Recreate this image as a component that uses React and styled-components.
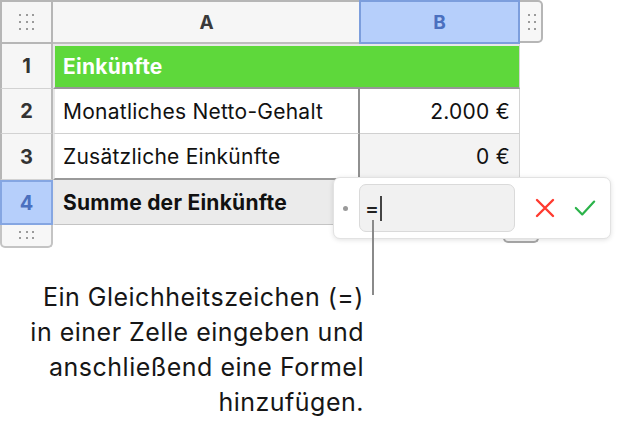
import React from "react";
import styled, { createGlobalStyle } from "styled-components";

const Global = createGlobalStyle`
  html, body { margin: 0; padding: 0; background: #ffffff; }
  body { font-family: Inter, "Liberation Sans", Arial, sans-serif; color: #111; }
  * { box-sizing: border-box; }
`;

const Page = styled.div`
  position: relative;
  width: 630px;
  height: 428px;
  overflow: hidden;
`;

const Sheet = styled.div`
  position: relative;
  display: grid;
  grid-template-columns: 53px 307px 160px 23px;
  grid-template-rows: 44px 45px 45px 46px 45px 23px;
  width: 543px;
`;

const Corner = styled.div`
  grid-column: 1;
  grid-row: 1;
  background: #f6f6f6;
  border: 2px solid #b6b6b6;
  display: flex;
  align-items: center;
  justify-content: center;
`;

const ColHeader = styled.div`
  grid-row: 1;
  grid-column: ${(p) => p.$col};
  display: flex;
  align-items: center;
  justify-content: center;
  font-size: 19px;
  font-weight: 700;
  background: ${(p) => (p.$selected ? "#b6cffb" : "#f6f6f6")};
  color: ${(p) => (p.$selected ? "#4b70bf" : "#3a3a3a")};
  border-top: 2px solid ${(p) => (p.$selected ? "#7c9edd" : "#b6b6b6")};
  border-bottom: 2px solid ${(p) => (p.$selected ? "#7c9edd" : "#bdbdbd")};
  border-left: ${(p) => (p.$selected ? "2px solid #7c9edd" : "none")};
  border-right: ${(p) => (p.$selected ? "2px solid #7c9edd" : "none")};
  margin-left: ${(p) => (p.$selected ? "-1px" : "0")};
`;

const SideHandle = styled.div`
  grid-column: 4;
  grid-row: 1;
  height: 43px;
  background: #f7f7f7;
  border: 2px solid #b6b6b6;
  border-left: none;
  border-radius: 0 5px 5px 0;
  display: flex;
  align-items: center;
  justify-content: center;
  padding-left: 2px;
`;

const BottomHandle = styled.div`
  grid-column: 1;
  grid-row: 6;
  background: #f7f7f7;
  border: 2px solid #c4c4c4;
  border-top: none;
  border-radius: 0 0 5px 5px;
  display: flex;
  align-items: center;
  justify-content: center;
  padding-bottom: 2px;
`;

const DotGrid = styled.div`
  display: grid;
  grid-template-columns: repeat(${(p) => p.$cols}, 2px);
  grid-auto-rows: 2px;
  column-gap: ${(p) => p.$gap}px;
  row-gap: ${(p) => p.$rgap}px;
`;

const Dot = styled.span`
  width: 2px;
  height: 2px;
  border-radius: 1px;
  background: #7c7c7c;
`;

const RowHeader = styled.div`
  grid-column: 1;
  grid-row: ${(p) => p.$row};
  display: flex;
  align-items: center;
  justify-content: center;
  font-size: 20px;
  font-weight: 700;
  background: ${(p) => (p.$selected ? "#b6cffb" : "#f6f6f6")};
  color: ${(p) => (p.$selected ? "#4b70bf" : "#333")};
  border: ${(p) => (p.$selected ? "2px solid #85a6e2" : "none")};
  border-left: 2px solid ${(p) => (p.$selected ? "#85a6e2" : "#b6b6b6")};
  border-right: 2px solid ${(p) => (p.$selected ? "#85a6e2" : "#b9b9b9")};
  border-bottom: ${(p) => (p.$selected ? "2px solid #85a6e2" : "1px solid #d2d2d2")};
`;

const Cell = styled.div`
  grid-row: ${(p) => p.$row};
  grid-column: ${(p) => p.$col};
  display: flex;
  align-items: center;
  justify-content: ${(p) => (p.$right ? "flex-end" : "flex-start")};
  padding: 0 ${(p) => (p.$right ? "9px" : "0")} 0 ${(p) => (p.$right ? "0" : "8px")};
  font-size: 21px;
  letter-spacing: 0.25px;
  font-weight: ${(p) => (p.$bold ? 700 : 400)};
  color: ${(p) => (p.$white ? "#ffffff" : "#111")};
  background: ${(p) => p.$bg || "#ffffff"};
  border-left: ${(p) => (p.$first ? "2px solid #e8e8e8" : "none")};
  border-right: ${(p) => p.$rb || "none"};
  border-bottom: ${(p) => p.$bb || "1px solid #d0d0d0"};
  border-top: ${(p) => (p.$top ? "2px solid #e8e8e8" : "none")};
  white-space: nowrap;
`;

const Peek = styled.div`
  position: absolute;
  left: 503px;
  top: 224px;
  width: 36px;
  height: 19px;
  border: 2px solid #a8a8a8;
  border-top: none;
  border-radius: 0 0 5px 5px;
  background: #f7f7f7;
`;

const Popup = styled.div`
  position: absolute;
  left: 333px;
  top: 177px;
  width: 278px;
  height: 62px;
  background: #ffffff;
  border: 1px solid #e2e2e2;
  border-radius: 7px;
  box-shadow: 0 1px 5px rgba(0, 0, 0, 0.12);
  display: flex;
  align-items: center;
  padding-left: 9px;
`;

const Bullet = styled.span`
  width: 5px;
  height: 5px;
  border-radius: 50%;
  background: #9a9a9a;
  margin-right: 11px;
`;

const Field = styled.div`
  width: 156px;
  height: 48px;
  background: #f1f1f1;
  border: 1px solid #dadada;
  border-radius: 7px;
  display: flex;
  align-items: center;
  padding-left: 5px;
  font-size: 21px;
  font-weight: 500;
  color: #222;
`;

const Caret = styled.span`
  width: 2px;
  height: 25px;
  background: #444;
  margin-left: 1px;
`;

const IconButton = styled.span`
  display: flex;
  align-items: center;
  justify-content: center;
  width: 22px;
  height: 22px;
  margin-left: ${(p) => p.$ml}px;
`;

const Leader = styled.div`
  position: absolute;
  left: 372px;
  top: 220px;
  width: 2px;
  height: 75px;
  background: #8a8a8a;
`;

const Caption = styled.p`
  margin: 32px 0 0 0;
  width: 364px;
  text-align: right;
  font-size: 25px;
  line-height: 35px;
  letter-spacing: 0.5px;
  color: #161616;
`;

function Dots({ cols, rows, gap, rgap }) {
  return (
    <DotGrid $cols={cols} $gap={gap} $rgap={rgap}>
      {Array.from({ length: cols * rows }).map((_, i) => (
        <Dot key={i} />
      ))}
    </DotGrid>
  );
}

export default function App() {
  return (
    <Page>
      <Global />
      <Sheet>
        <Corner>
          <Dots cols={3} rows={3} gap={4.6} rgap={5} />
        </Corner>
        <ColHeader $col={2}>A</ColHeader>
        <ColHeader $col={3} $selected>B</ColHeader>
        <SideHandle>
          <Dots cols={2} rows={3} gap={4} rgap={5} />
        </SideHandle>

        <RowHeader $row={2}>1</RowHeader>
        <Cell
          $row={2}
          $col="2 / 4"
          $bg="#5ed83b"
          $bold
          $white
          $first
          $top
          $rb="1px solid #d4d4d4"
          $bb="2px solid #979797"
        >
          Einkünfte
        </Cell>

        <RowHeader $row={3}>2</RowHeader>
        <Cell $row={3} $col={2} $first $rb="2px solid #909090">
          Monatliches Netto-Gehalt
        </Cell>
        <Cell $row={3} $col={3} $right $rb="1px solid #d4d4d4">
          2.000 €
        </Cell>

        <RowHeader $row={4}>3</RowHeader>
        <Cell $row={4} $col={2} $first $rb="2px solid #909090" $bb="2px solid #9a9a9a">
          Zusätzliche Einkünfte
        </Cell>
        <Cell $row={4} $col={3} $right $bg="#f3f3f3" $rb="1px solid #d4d4d4" $bb="2px solid #9a9a9a">
          0 €
        </Cell>

        <RowHeader $row={5} $selected>4</RowHeader>
        <Cell $row={5} $col={2} $first $bold $bg="#ebebeb" $rb="2px solid #909090" $bb="1px solid #c4c4c4">
          Summe der Einkünfte
        </Cell>
        <Cell $row={5} $col={3} $bg="#ebebeb" $rb="1px solid #d4d4d4" $bb="1px solid #c4c4c4" />

        <BottomHandle>
          <Dots cols={3} rows={2} gap={4.6} rgap={4} />
        </BottomHandle>

        <Peek />
        <Popup>
          <Bullet />
          <Field>
            =<Caret />
          </Field>
          <IconButton $ml={19}>
            <svg width="20" height="20" viewBox="0 0 20 20">
              <path d="M2 2 L18 18 M18 2 L2 18" stroke="#ff3a2f" strokeWidth="2.4" strokeLinecap="round" fill="none" />
            </svg>
          </IconButton>
          <IconButton $ml={18}>
            <svg width="24" height="20" viewBox="0 0 24 20">
              <path d="M2 10 L9 17 L22 3" stroke="#2bb34a" strokeWidth="2.4" strokeLinecap="round" strokeLinejoin="round" fill="none" />
            </svg>
          </IconButton>
        </Popup>
        <Leader />
      </Sheet>
      <Caption>
        Ein Gleichheitszeichen (=)
        <br />
        in einer Zelle eingeben und
        <br />
        anschließend eine Formel
        <br />
        hinzufügen.
      </Caption>
    </Page>
  );
}
